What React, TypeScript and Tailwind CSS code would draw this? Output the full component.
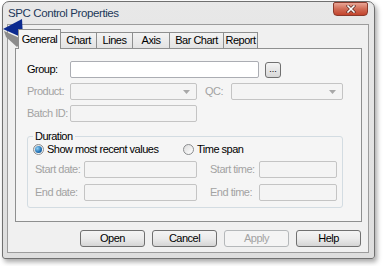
import type { ReactNode } from 'react'

// disabled text fields and combos share the same pale look
function Field({ w, disabled = true, combo = false }: { w: string; disabled?: boolean; combo?: boolean }) {
  return (
    <div
      className={`${w} h-[17px] rounded-[2px] border flex items-center justify-end pr-[6px] ${
        disabled ? 'border-[#c4c4c4] bg-[#f4f4f4]' : 'border-[#abadb3] bg-white'
      }`}
    >
      {combo && (
        <svg width="7" height="4" viewBox="0 0 7 4">
          <path d="M0 0H7L3.5 4Z" fill="#a8a8a8" />
        </svg>
      )}
    </div>
  )
}

function Label({ w, children, disabled = true }: { w: string; children: ReactNode; disabled?: boolean }) {
  return <span className={`${w} shrink-0 ${disabled ? 'text-[#a3a3a3]' : 'text-black'}`}>{children}</span>
}

function Radio({ checked }: { checked?: boolean }) {
  return (
    <span className="w-[11px] h-[11px] rounded-full border border-[#8a8c8e] bg-gradient-to-br from-[#dcdcdc] to-white flex items-center justify-center shrink-0">
      {checked && (
        <span className="w-[7px] h-[7px] rounded-full bg-[radial-gradient(circle_at_35%_35%,#8fd0f5,#1f6fb3_60%,#174f86)]" />
      )}
    </span>
  )
}

function Button({ children, disabled }: { children: ReactNode; disabled?: boolean }) {
  return (
    <button
      className={`w-[65px] h-[17px] rounded-[3px] border flex items-center justify-center leading-none ${
        disabled
          ? 'border-[#b5b8ba] bg-[#f4f4f4] text-[#a3a3a3]'
          : 'border-[#707070] bg-gradient-to-b from-[#f4f4f4] via-[#ebebeb] to-[#d5d5d5] text-black'
      }`}
    >
      {children}
    </button>
  )
}

const tabs = [
  { name: 'Chart', w: 'w-[37px]' },
  { name: 'Lines', w: 'w-[37px]' },
  { name: 'Axis', w: 'w-[38px]' },
  { name: 'Bar Chart', w: 'w-[55px]' },
  { name: 'Report', w: 'w-[35px]' },
]

export default function App() {
  return (
    <div className="relative w-[386px] h-[266px] bg-white overflow-hidden font-['Liberation_Sans',Arial,sans-serif] text-[11px] tracking-[-0.5px] text-black">
      {/* window */}
      <div className="ml-[2px] mt-[1px] w-[373px] h-[258px] rounded-t-[7px] rounded-b-[3px] border border-[#707070] bg-gradient-to-b from-[#e8e8e8] to-[#dedede] shadow-[2px_3px_5px_rgba(0,0,0,0.35)] flex flex-col">
        <div className="h-[22px] flex items-start justify-between shrink-0">
          <span className="pl-[5px] pt-[4px] text-[11.5px] leading-[14px] tracking-[-0.4px] text-[#22385a]">
            SPC Control Properties
          </span>
          <div className="mr-[6px] w-[35px] h-[14px] rounded-b-[4px] rounded-t-[2px] border border-[#8a3a2c] bg-gradient-to-b from-[#e9a595] via-[#d06b55] to-[#c2432c] flex items-center justify-center">
            <svg width="10" height="8" viewBox="0 0 10 8">
              <path d="M2 1L8 7M8 1L2 7" stroke="#5a2a22" strokeWidth="3" strokeLinecap="square" />
              <path d="M2 1L8 7M8 1L2 7" stroke="#ffffff" strokeWidth="1.6" strokeLinecap="square" />
            </svg>
          </div>
        </div>

        {/* client area */}
        <div className="ml-[4px] mr-[5px] mb-[5px] flex-1 border border-[#9c9c9c] bg-[#f0f0f0] flex flex-col pl-[7px] pr-[6px] pt-[4px]">
          {/* tab strip */}
          <div className="h-[20px] -mb-px pl-[3px] flex items-end">
            <div className="relative z-10 w-[43px] h-[20px] border border-b-0 border-[#8e8f8f] bg-[#f5f5f5] flex items-center justify-center pb-[1px]">
              General
            </div>
            {tabs.map((t) => (
              <div
                key={t.name}
                className={`${t.w} h-[17px] -ml-px border border-[#8e8f8f] bg-gradient-to-b from-[#f3f3f3] to-[#e3e3e3] flex items-center justify-center pb-[1px]`}
              >
                {t.name}
              </div>
            ))}
          </div>

          {/* tab page */}
          <div className="h-[174px] border border-[#8e8f8f] bg-[#f5f5f5] pl-[11px] pt-[12px]">
            <div className="h-[17px] flex items-center">
              <Label w="w-[43px]" disabled={false}>
                Group:
              </Label>
              <Field w="w-[189px]" disabled={false} />
              <div className="ml-[6px] w-[16px] h-[16px] rounded-[3px] border border-[#707070] bg-gradient-to-b from-[#f4f4f4] to-[#d8d8d8] flex items-end justify-center pb-[3px] text-[9px] leading-none tracking-normal">
                ...
              </div>
            </div>
            <div className="mt-[5px] h-[17px] flex items-center">
              <Label w="w-[43px]">Product:</Label>
              <Field w="w-[127px]" combo />
              <Label w="w-[26px] ml-[8px]">QC:</Label>
              <Field w="w-[112px]" combo />
            </div>
            <div className="mt-[5px] h-[17px] flex items-center">
              <Label w="w-[43px]">Batch ID:</Label>
              <Field w="w-[127px]" />
            </div>

            <fieldset className="mt-[8px] w-[316px] rounded-[3px] border border-[#d3dce2] pb-[6px]">
              <legend className="ml-[5px] px-[2px] leading-[13px]">Duration</legend>
              <div className="h-[13px] pl-[5px] flex items-center">
                <div className="w-[150px] flex items-center gap-[3px]">
                  <Radio checked />
                  <span>Show most recent values</span>
                </div>
                <div className="flex items-center gap-[3px]">
                  <Radio />
                  <span>Time span</span>
                </div>
              </div>
              <div className="mt-[5px] h-[17px] pl-[7px] flex items-center">
                <Label w="w-[49px]">Start date:</Label>
                <Field w="w-[113px]" />
                <Label w="w-[49px] ml-[13px]">Start time:</Label>
                <Field w="w-[78px]" />
              </div>
              <div className="mt-[6px] h-[17px] pl-[7px] flex items-center">
                <Label w="w-[49px]">End date:</Label>
                <Field w="w-[113px]" />
                <Label w="w-[49px] ml-[13px]">End time:</Label>
                <Field w="w-[78px]" />
              </div>
            </fieldset>
          </div>

          {/* dialog buttons */}
          <div className="mt-[8px] pr-[1px] flex justify-end gap-[7px]">
            <Button>Open</Button>
            <Button>Cancel</Button>
            <Button disabled>Apply</Button>
            <Button>Help</Button>
          </div>
        </div>
      </div>

      {/* callout arrow pointing at the General tab */}
      <svg className="absolute left-0 top-[15px]" width="28" height="34" viewBox="0 15 28 34">
        <path d="M4 31L24 40L17 47L6 37Z" fill="#8c8c8c" />
        <path d="M3 29L22 19L23 38Z" fill="#0c2a8f" />
      </svg>
    </div>
  )
}
